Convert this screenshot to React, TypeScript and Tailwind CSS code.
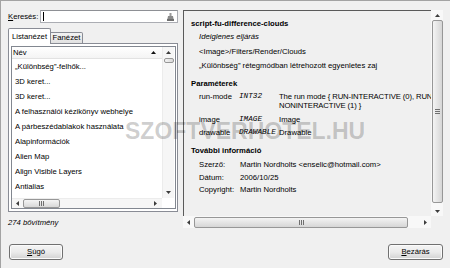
import React from 'react';

type Dir = 'up' | 'down' | 'left' | 'right';

function Arrow({ dir }: { dir: Dir }) {
  const vert = dir === 'up' || dir === 'down';
  const pts = {
    up: '0,3 2.5,0 5,3',
    down: '0,0 2.5,3 5,0',
    left: '3,0 0,2.5 3,5',
    right: '0,0 3,2.5 0,5',
  }[dir];
  return (
    <svg width={vert ? 5 : 3} height={vert ? 3 : 5} viewBox={vert ? '0 0 5 3' : '0 0 3 5'}>
      <polygon points={pts} fill="#3c3c3c" />
    </svg>
  );
}

function VGrip() {
  return (
    <div className="flex flex-col gap-[1px]">
      <div className="w-[5px] h-px bg-[#6f6f6f]" />
      <div className="w-[5px] h-px bg-[#6f6f6f]" />
      <div className="w-[5px] h-px bg-[#6f6f6f]" />
    </div>
  );
}

function HGrip() {
  return (
    <div className="flex gap-[1px]">
      <div className="w-px h-[5px] bg-[#6f6f6f]" />
      <div className="w-px h-[5px] bg-[#6f6f6f]" />
      <div className="w-px h-[5px] bg-[#6f6f6f]" />
    </div>
  );
}

function Button({ label, width }: { label: [string, string]; width: string }) {
  return (
    <div
      className={`${width} h-[16px] rounded-[3px] border border-[#707070] bg-linear-to-b from-[#f4f4f4] via-[#ebebeb] to-[#d2d2d2] shadow-[inset_0_0_0_1px_#fbfbfb] flex items-center justify-center leading-none`}
    >
      <span>
        <span className="underline underline-offset-1">{label[0]}</span>
        {label[1]}
      </span>
    </div>
  );
}

const items = [
  '„Különbség”-felhők...',
  '3D keret...',
  '3D keret...',
  'A felhasználói kézikönyv webhelye',
  'A párbeszédablakok használata',
  'Alapinformációk',
  'Alien Map',
  'Align Visible Layers',
  'Antialias',
  'Apply Canvas...',
];

function PluginList() {
  return (
    <div className="h-[163px] border border-[#828790] bg-white grid grid-cols-[150px_12px] grid-rows-[151px_10px]">
      <div className="overflow-hidden">
        <div className="h-[12px] flex items-center justify-between pl-[1px] pr-[6px] border-b border-[#e2e2e2] bg-linear-to-b from-white to-[#f4f4f4] leading-none">
          <span>Név</span>
          <svg width="5" height="3" viewBox="0 0 5 3">
            <polygon points="0,3 2.5,0 5,3" fill="#111" />
          </svg>
        </div>
        {items.map((t, i) => (
          <div key={i} className="h-[15px] flex items-center pl-[3px] leading-none whitespace-nowrap">
            {t}
          </div>
        ))}
      </div>
      <div className="flex flex-col items-center bg-[#f6f6f6] border-l border-[#ececec]">
        <div className="h-[11px] flex items-center justify-center">
          <Arrow dir="up" />
        </div>
        <div className="w-[10px] h-[5px] rounded-[2px] border border-[#979797] bg-linear-to-r from-[#f4f4f4] to-[#d8d8d8]" />
        <div className="flex-1" />
        <div className="h-[12px] flex items-center justify-center">
          <Arrow dir="down" />
        </div>
      </div>
      <div className="flex items-center bg-[#f6f6f6] border-t border-[#ececec]">
        <div className="w-[11px] flex justify-center">
          <Arrow dir="left" />
        </div>
        <div className="w-[37px] h-[9px] rounded-[2px] border border-[#979797] bg-linear-to-b from-[#f4f4f4] to-[#d8d8d8] flex items-center justify-center">
          <HGrip />
        </div>
        <div className="flex-1" />
        <div className="w-[14px] flex justify-center">
          <Arrow dir="right" />
        </div>
      </div>
      <div className="bg-white" />
    </div>
  );
}

function LeftPane() {
  return (
    <div className="w-[177px] pl-[7px] flex flex-col">
      <div className="h-[13px] flex items-center justify-between">
        <span className="leading-none">
          <span className="underline underline-offset-1">K</span>eresés:
        </span>
        <div className="w-[138px] h-[13px] border border-[#abadb3] border-t-[#8e9095] bg-white flex items-center justify-between pl-[2px] pr-[3px]">
          <div className="w-px h-[9px] bg-black" />
          <svg width="7" height="8" viewBox="0 0 7 8">
            <rect x="2.5" y="0" width="2" height="3" fill="#9a9a9a" />
            <polygon points="1,3 6,3 7,8 0,8" fill="#8a8a8a" />
            <rect x="0" y="6" width="7" height="2" fill="#6f6f6f" />
          </svg>
        </div>
      </div>
      <div className="mt-[5px] flex items-end h-[16px] -mb-px relative z-10">
        <div className="w-[43px] h-[16px] border border-b-0 border-[#898c95] bg-white rounded-t-[2px] flex items-center justify-center leading-none">
          Listanézet
        </div>
        <div className="w-[32px] h-[12px] border border-l-0 border-[#898c95] bg-linear-to-b from-[#f3f3f3] to-[#e1e1e1] rounded-tr-[2px] flex items-center justify-center leading-none">
          Fanézet
        </div>
      </div>
      <div className="w-[170px] h-[169px] border border-[#898c95] bg-white pl-[2px] pt-[2px] pr-px">
        <PluginList />
      </div>
      <div className="mt-[6px] italic leading-[9px]">274 bővítmény</div>
    </div>
  );
}

function RightPane() {
  return (
    <div className="ml-[5px] w-[260px] h-[218px] grid grid-cols-[248px_12px] grid-rows-[206px_12px]">
      <div className="border-l border-t border-[#5a5a5a] overflow-hidden whitespace-nowrap leading-[9px]">
        <div className="pl-[7px] mt-[8px] font-bold">script-fu-difference-clouds</div>
        <div className="pl-[15px] mt-[4px] italic">Ideiglenes eljárás</div>
        <div className="pl-[15px] mt-[6px]">&lt;Image&gt;/Filters/Render/Clouds</div>
        <div className="pl-[15px] mt-[5px]">„Különbség” rétegmódban létrehozott egyenletes zaj</div>
        <div className="pl-[7px] mt-[9px] font-bold">Paraméterek</div>
        <div className="pl-[15px] mt-[4px] grid grid-cols-[40px_40px_1fr]">
          <span>run-mode</span>
          <span className="italic font-['Liberation_Mono',monospace]">INT32</span>
          <span className="tracking-[-0.1px]">
            The run mode {'{'} RUN-INTERACTIVE (0), RUN
            <br />
            NONINTERACTIVE (1) {'}'}
          </span>
        </div>
        <div className="pl-[15px] mt-[5px] grid grid-cols-[40px_40px_1fr]">
          <span>image</span>
          <span className="italic font-['Liberation_Mono',monospace]">IMAGE</span>
          <span>Image</span>
        </div>
        <div className="pl-[15px] mt-[4px] grid grid-cols-[40px_40px_1fr]">
          <span>drawable</span>
          <span className="italic font-['Liberation_Mono',monospace]">DRAWABLE</span>
          <span>Drawable</span>
        </div>
        <div className="pl-[7px] mt-[9px] font-bold">További információ</div>
        <div className="pl-[15px] mt-[5px] grid grid-cols-[41px_1fr]">
          <span>Szerző:</span>
          <span>Martin Nordholts &lt;enselic@hotmail.com&gt;</span>
        </div>
        <div className="pl-[15px] mt-[4px] grid grid-cols-[41px_1fr]">
          <span>Dátum:</span>
          <span>2006/10/25</span>
        </div>
        <div className="pl-[15px] mt-[3px] grid grid-cols-[41px_1fr]">
          <span>Copyright:</span>
          <span>Martin Nordholts</span>
        </div>
      </div>
      <div className="flex flex-col items-center bg-[#f8f8f8]">
        <div className="h-[10px] flex items-center justify-center">
          <Arrow dir="up" />
        </div>
        <div className="w-[11px] h-[183px] rounded-[2px] border border-[#979797] bg-linear-to-r from-[#f4f4f4] to-[#d6d6d6] flex items-center justify-center">
          <VGrip />
        </div>
        <div className="flex-1" />
        <div className="h-[10px] flex items-center justify-center">
          <Arrow dir="down" />
        </div>
      </div>
      <div className="flex items-center bg-[#f8f8f8]">
        <div className="w-[11px] flex justify-center">
          <Arrow dir="left" />
        </div>
        <div className="w-[214px] h-[11px] rounded-[2px] border border-[#979797] bg-linear-to-b from-[#f4f4f4] to-[#d6d6d6] flex items-center justify-center">
          <HGrip />
        </div>
        <div className="flex-1" />
        <div className="w-[11px] flex justify-center">
          <Arrow dir="right" />
        </div>
      </div>
      <div className="bg-[#f0f0f0]" />
    </div>
  );
}

export default function App() {
  return (
    <div className="relative w-[450px] h-[268px] overflow-hidden border-l border-t border-[#a3a3a3] bg-[#f0f0f0] text-[7.7px] text-black font-['Liberation_Sans',Arial,sans-serif]">
      <div className="flex pt-[9px]">
        <LeftPane />
        <RightPane />
      </div>
      <div className="mt-[16px] flex justify-between pl-[8px] pr-[7px]">
        <Button label={['S', 'úgó']} width="w-[54px]" />
        <Button label={['B', 'ezárás']} width="w-[55px]" />
      </div>
      <div className="pointer-events-none absolute left-[124px] top-[119px] text-[23px] leading-[23px] font-bold text-black/[0.2] whitespace-nowrap">
        SZOFTVERHOTEL.HU
      </div>
    </div>
  );
}
